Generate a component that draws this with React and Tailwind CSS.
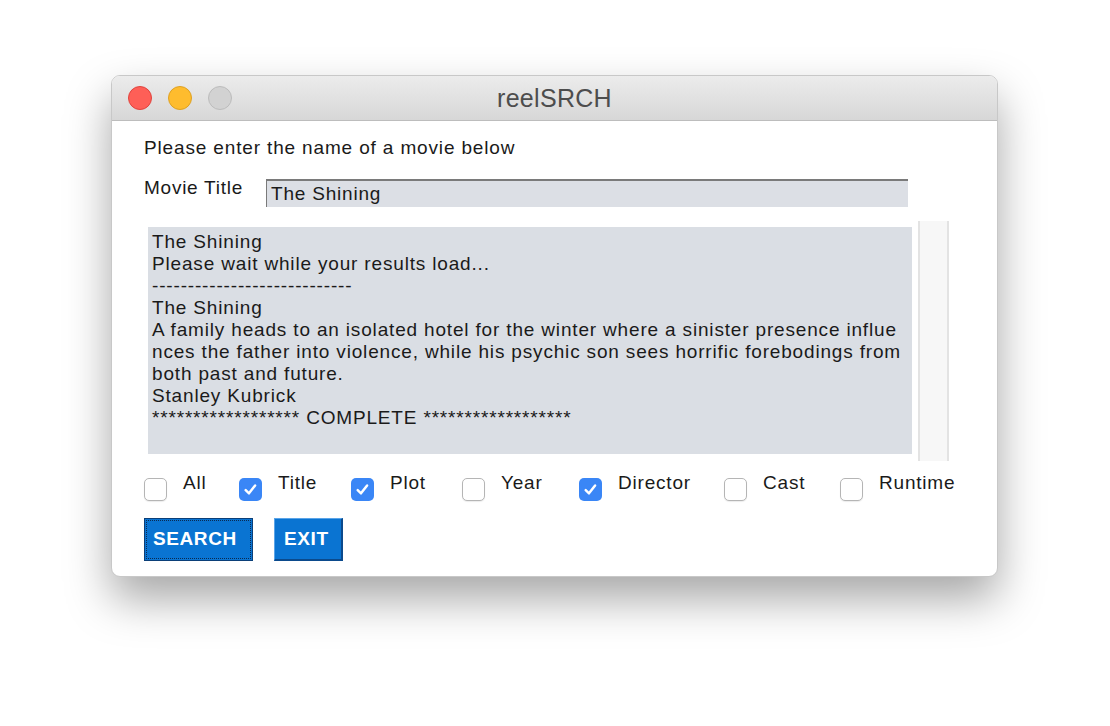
import React from "react";

const lines = [
    "The Shining",
    "Please wait while your results load...",
    "----------------------------",
    "The Shining",
    "A family heads to an isolated hotel for the winter where a sinister presence influe",
    "nces the father into violence, while his psychic son sees horrific forebodings from",
    "both past and future.",
    "Stanley Kubrick",
    "****************** COMPLETE ******************",
];

const options = [
    { label: "All", checked: false, w: "w-[95px]" },
    { label: "Title", checked: true, w: "w-[112px]" },
    { label: "Plot", checked: true, w: "w-[111px]" },
    { label: "Year", checked: false, w: "w-[117px]" },
    { label: "Director", checked: true, w: "w-[145px]" },
    { label: "Cast", checked: false, w: "w-[116px]" },
    { label: "Runtime", checked: false, w: "w-[120px]" },
];

function Check({ checked }) {
    if (checked) {
        return (
            <div className="w-[23px] h-[23px] rounded-[5px] bg-[#3a86f6] flex items-center justify-center">
                <svg width="15" height="15" viewBox="0 0 14 14">
                    <path d="M2.5 7.6 L5.6 10.6 L11.3 3.2" fill="none" stroke="white" strokeWidth="2.3" strokeLinecap="round" strokeLinejoin="round" />
                </svg>
            </div>
        );
    }
    return <div className="w-[23px] h-[23px] rounded-[5px] bg-white border border-[#b5b5b5] shadow-[0_1px_1px_rgba(0,0,0,0.08)]" />;
}

export default function App() {
    return (
        <div className="w-[1110px] h-[726px] bg-white pt-[75px] pl-[111px] font-['Liberation_Sans',Arial,sans-serif]">
            <div className="w-[887px] h-[502px] rounded-[9px] bg-white border border-[#c8c8c8] shadow-[0_22px_45px_rgba(0,0,0,0.35)] overflow-hidden flex flex-col">
                {/* title bar */}
                <div className="h-[45px] shrink-0 flex items-center px-[16px] bg-gradient-to-b from-[#ececec] to-[#d7d7d7] border-b border-[#bdbdbd]">
                    <div className="flex gap-[16px] w-[120px]">
                        <div className="w-[24px] h-[24px] rounded-full bg-[#fe5f57] border border-[#e0443e]" />
                        <div className="w-[24px] h-[24px] rounded-full bg-[#febc2e] border border-[#dea123]" />
                        <div className="w-[24px] h-[24px] rounded-full bg-[#d2d2d2] border border-[#bcbcbc]" />
                    </div>
                    <div className="flex-1 text-center text-[25px] tracking-[0.3px] leading-[28px] text-[#4d4d4d] pr-[120px]">reelSRCH</div>
                </div>

                {/* content */}
                <div className="flex flex-col pl-[32px] pt-[16px]">
                    <div className="text-[19px] tracking-[0.85px] text-[#1a1a1a] leading-[22px]">Please enter the name of a movie below</div>

                    <div className="flex items-start mt-[20px]">
                        <div className="w-[122px] text-[19px] tracking-[0.75px] text-[#1a1a1a] leading-[22px] -mt-[2px]">Movie Title</div>
                        <div className="w-[642px] h-[28px] bg-[#dcdfe5] border-t-2 border-l border-[#7a7a7a] pl-[4px] text-[19px] tracking-[0.8px] leading-[26px] text-[#1a1a1a]">
                            The Shining
                        </div>
                    </div>

                    <div className="flex mt-[14px]">
                        <div className="w-[764px] h-[227px] mt-[6px] ml-[4px] bg-[#dadee4] pl-[4px] pt-[4px] text-[19px] tracking-[0.83px] leading-[22px] text-[#1a1a1a] whitespace-pre overflow-hidden">
                            {lines.map((l, i) => (
                                <div key={i}>{l}</div>
                            ))}
                        </div>
                        <div className="ml-[6px] w-[31px] h-[240px] bg-[#f7f7f7] border-l-2 border-r-2 border-[#e3e3e3]" />
                    </div>

                    <div className="flex mt-[11px]">
                        {options.map((o) => (
                            <div key={o.label} className={`${o.w} flex items-start`}>
                                <div className="mt-[6px]">
                                    <Check checked={o.checked} />
                                </div>
                                <span className="ml-[16px] text-[19px] tracking-[0.8px] leading-[22px] text-[#1a1a1a]">{o.label}</span>
                            </div>
                        ))}
                    </div>

                    <div className="flex mt-[17px] gap-[21px]">
                        <div className="w-[109px] h-[43px] bg-[#0a74d2] border border-[#0b3f78] flex items-center pl-[8px] outline outline-1 outline-dotted outline-[#0b2a50] -outline-offset-[3px]">
                            <span className="text-white font-bold text-[19px] tracking-[0.6px]">SEARCH</span>
                        </div>
                        <div className="w-[69px] h-[43px] bg-[#0a74d2] border-t border-l border-[#5aa4e8] border-r-2 border-b-2 border-r-[#0b4a8c] border-b-[#0b4a8c] flex items-center pl-[9px]">
                            <span className="text-white font-bold text-[19px] tracking-[0.6px]">EXIT</span>
                        </div>
                    </div>
                </div>
            </div>
        </div>
    );
}
